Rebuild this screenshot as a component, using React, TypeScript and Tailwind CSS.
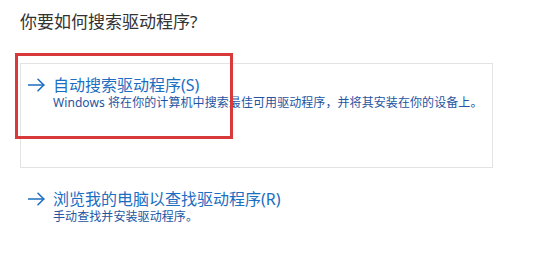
import React from "react";

function Arrow() {
  return (
    <svg width="17" height="14" viewBox="0 0 17 14" fill="none" className="shrink-0">
      <path d="M0.5 7H15.8" stroke="#1b6ec2" strokeWidth="1.6" strokeLinecap="round" />
      <path d="M10 1.3L15.8 7L10 12.7" stroke="#1b6ec2" strokeWidth="1.6" strokeLinecap="round" strokeLinejoin="round" />
    </svg>
  );
}

function Option({ title, desc }: { title: string; desc: string }) {
  return (
    <div className="flex flex-col">
      <div className="flex items-center gap-[8px] h-[20px]">
        <Arrow />
        <span className="text-[16px] leading-[20px] text-[#1b6ec2] whitespace-nowrap">{title}</span>
      </div>
      <div className="pl-[25px] text-[12px] leading-[16px] tracking-[0.08px] text-[#2355a3] whitespace-nowrap">{desc}</div>
    </div>
  );
}

export default function App() {
  return (
    <div
      className="relative w-[536px] h-[277px] bg-white overflow-hidden"
      style={{ fontFamily: '"Segoe UI", "Noto Sans", "Noto Sans CJK SC", sans-serif' }}
    >
      <div className="pt-[12px] pl-[20px] text-[17px] leading-[20px] text-[#333333]">你要如何搜索驱动程序?</div>
      <div className="ml-[20px] mt-[31px] w-[473px] h-[105px] border border-[#e3e3e3] pt-[11px] pl-[7px]">
        <Option title="自动搜索驱动程序(S)" desc="Windows 将在你的计算机中搜索最佳可用驱动程序，并将其安装在你的设备上。" />
      </div>
      <div className="ml-[28px] mt-[21px]">
        <Option title="浏览我的电脑以查找驱动程序(R)" desc="手动查找并安装驱动程序。" />
      </div>
      <div className="absolute left-[15px] top-[53px] w-[218px] h-[86px] border-[3px] border-[#d8393b]" />
    </div>
  );
}
